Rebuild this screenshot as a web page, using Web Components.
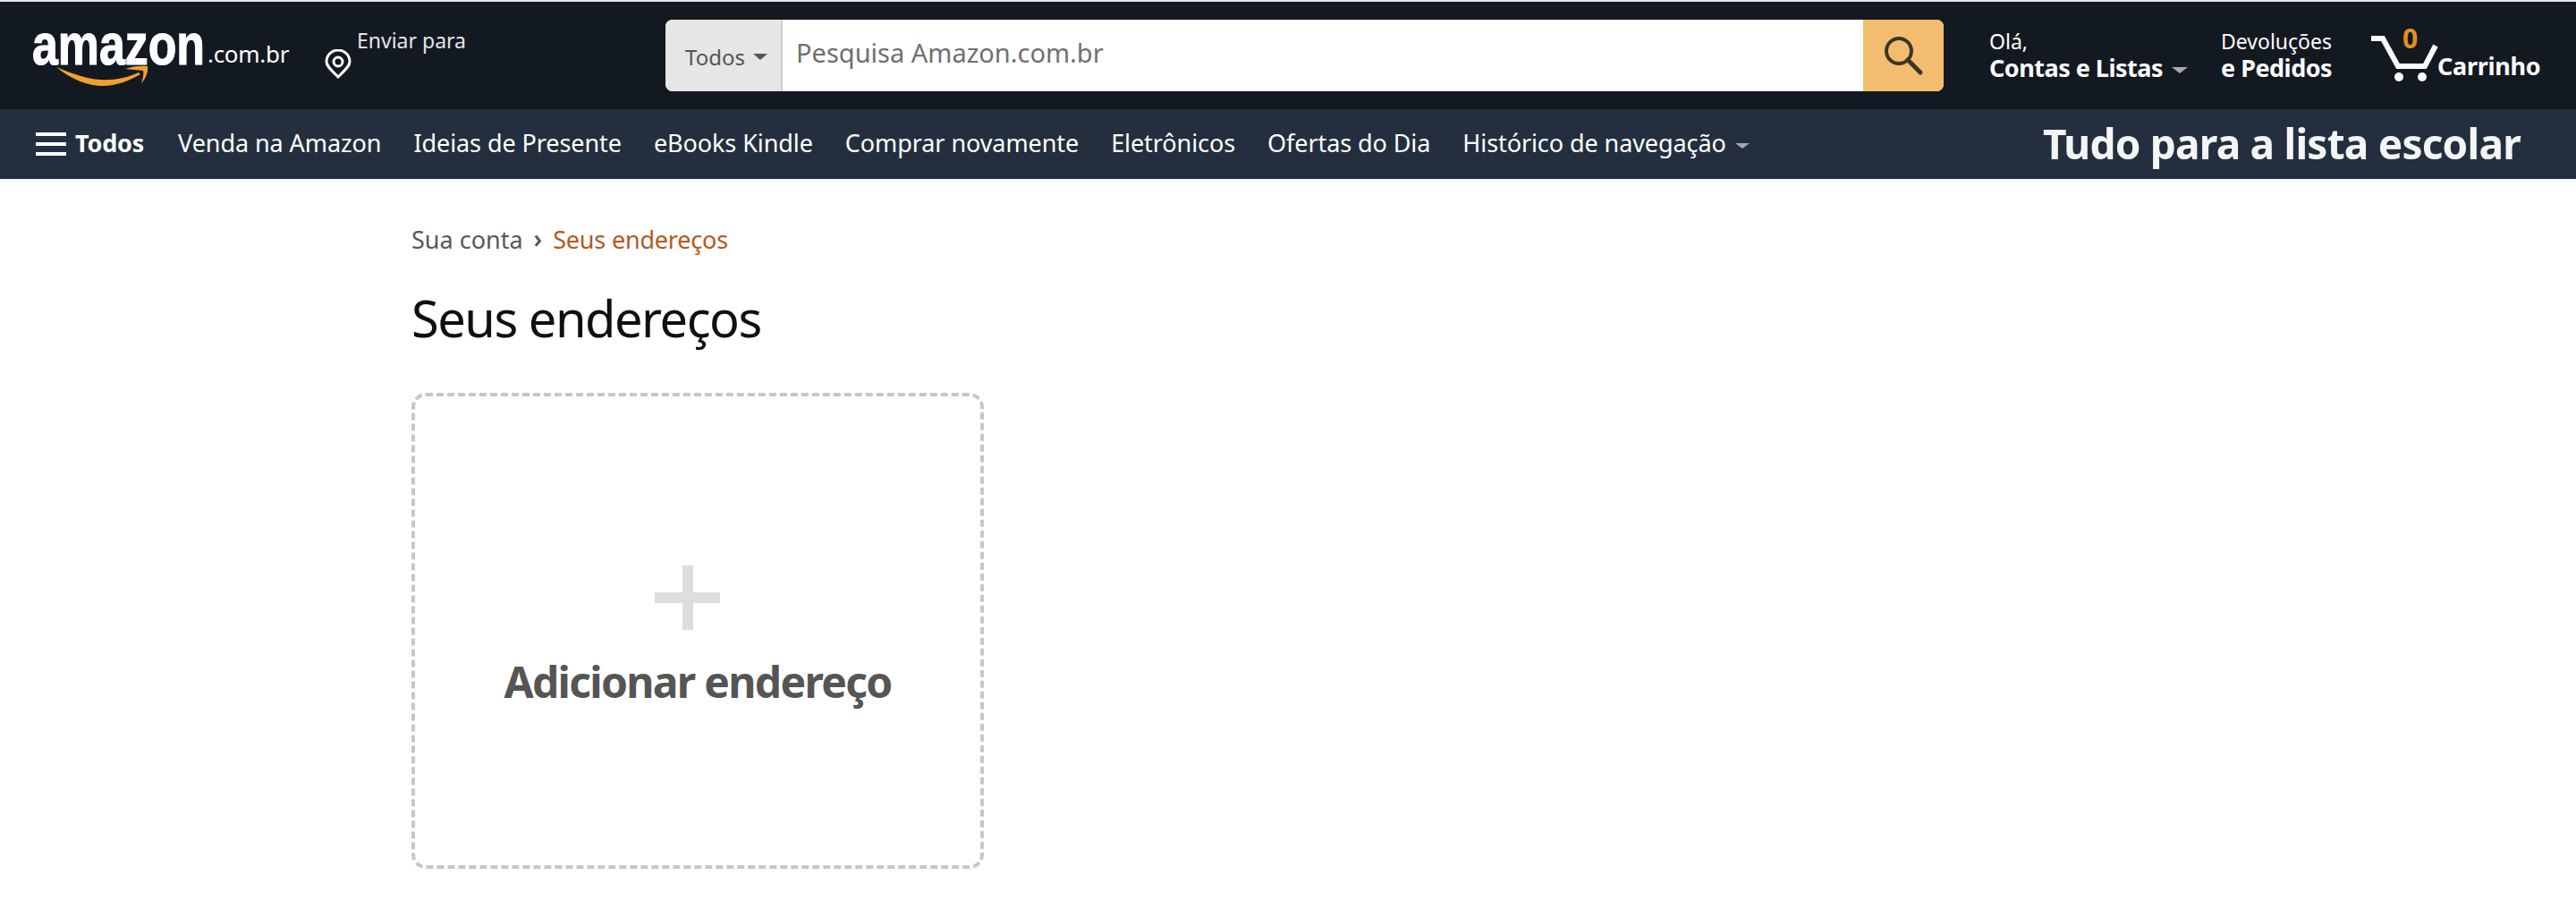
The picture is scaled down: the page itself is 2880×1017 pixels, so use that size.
<!DOCTYPE html>
<html lang="pt-BR">
<head>
<meta charset="utf-8">
<title>Seus endereços</title>
<style>
  html, body { margin: 0; padding: 0; background: #fff; }
  body { font-family: "Noto Sans", "Open Sans", sans-serif; overflow: hidden; }
</style>
</head>
<body>
<amz-top-bar>
  <amz-logo slot="logo"></amz-logo>
  <amz-deliver slot="deliver">Enviar para</amz-deliver>
  <amz-search slot="search" placeholder="Pesquisa Amazon.com.br">Todos</amz-search>
  <amz-account slot="account" line="Olá," strong="Contas e Listas" caret style="--w:259px"></amz-account>
  <amz-account slot="account" line="Devoluções" strong="e Pedidos" style="--w:168px"></amz-account>
  <amz-cart slot="cart" count="0">Carrinho</amz-cart>
</amz-top-bar>
<amz-nav-bar promo="Tudo para a lista escolar">
  <amz-nav-link>Venda na Amazon</amz-nav-link>
  <amz-nav-link>Ideias de Presente</amz-nav-link>
  <amz-nav-link>eBooks Kindle</amz-nav-link>
  <amz-nav-link>Comprar novamente</amz-nav-link>
  <amz-nav-link>Eletrônicos</amz-nav-link>
  <amz-nav-link>Ofertas do Dia</amz-nav-link>
  <amz-nav-link caret>Histórico de navegação</amz-nav-link>
</amz-nav-bar>
<amz-page>
  <amz-crumbs slot="crumbs" parent="Sua conta">Seus endereços</amz-crumbs>
  <h1 slot="title">Seus endereços</h1>
  <amz-add-card slot="card">Adicionar endereço</amz-add-card>
</amz-page>

<script>
class TopBar extends HTMLElement {
  connectedCallback() {
    this.attachShadow({mode: 'open'}).innerHTML = `
<style>
  :host { display: block; border-top: 2px solid #e3e4e4; height: 120px; background: #131921; color: #fff; }
  .row { display: flex; align-items: flex-start; height: 100%; padding: 20px 0 0 36px; box-sizing: border-box; }
  .deliver { margin-left: 40px; }
  .search { flex: none; }
  .account { display: flex; margin-left: 51px; }
</style>
<div class="row">
  <slot name="logo"></slot>
  <div class="deliver"><slot name="deliver"></slot></div>
  <div class="search"><slot name="search"></slot></div>
  <div class="account"><slot name="account"></slot></div>
  <div class="cart"><slot name="cart"></slot></div>
</div>`;
  }
}
customElements.define('amz-top-bar', TopBar);

class Logo extends HTMLElement {
  connectedCallback() {
    this.attachShadow({mode: 'open'}).innerHTML = `
<style>
  :host { display: block; position: relative; width: 287px; height: 78px; white-space: nowrap; }
  .word { display: inline-block; width: 196px; font: bold 64px/56px "Liberation Sans", sans-serif; color: #fff;
          -webkit-text-stroke: 1.2px #fff; transform: scaleX(.81); transform-origin: 0 50%; }
  .tld { font: 26px/30px "Noto Sans", sans-serif; color: #fff; letter-spacing: -.3px; vertical-align: 2px; }
  svg { position: absolute; left: 24px; top: 48px; }
</style>
<span class="word">amazon</span><span class="tld">.com.br</span>
<svg width="110" height="30" viewBox="0 0 110 30" fill="#f0a030">
  <path d="M3 5C20 19 38 26 55 26C70 26 85 20 97 13L95 11C82 17 68 20 52 19C36 18 20 12 3 5Z"/>
  <path d="M80 7C88 4 98 3 105 4C106 10 103 18 98 23C100 17 101 12 100 9C94 8 87 8 80 7Z"/>
</svg>`;
  }
}
customElements.define('amz-logo', Logo);

class Deliver extends HTMLElement {
  connectedCallback() {
    this.attachShadow({mode: 'open'}).innerHTML = `
<style>
  :host { display: flex; align-items: flex-start; width: 381px; color: #e6e6e6; font-size: 23px; line-height: 32px; }
  svg { margin-top: 33px; margin-right: 6px; flex: none; }
  span { margin-top: 7px; white-space: nowrap; }
</style>
<svg width="30" height="33" viewBox="0 0 30 33" fill="none" stroke="#fff" stroke-width="3">
  <path d="M15 31C8 24 2 19 2 14a13 13 0 0 1 26 0C28 19 22 24 15 31Z"/>
  <circle cx="15" cy="14" r="5"/>
</svg>
<span><slot></slot></span>`;
  }
}
customElements.define('amz-deliver', Deliver);

class Search extends HTMLElement {
  connectedCallback() {
    let ph = this.getAttribute('placeholder');
    this.attachShadow({mode: 'open'}).innerHTML = `
<style>
  :host { display: flex; width: 1429px; height: 80px; border-radius: 8px; overflow: hidden; background: #fff; }
  .cat { width: 131px; box-sizing: border-box; display: flex; align-items: center; gap: 9px; padding: 2px 0 0 22px;
         background: #e6e6e6; border-right: 2px solid #cdcdcd; color: #555; font-size: 24px; }
  .cat i { width: 0; height: 0; border: 8px solid transparent; border-top: 7px solid #555; border-bottom: 0; }
  .input { flex: 1; padding-left: 15px; line-height: 74px; color: #6f6f6f; font-size: 29px; }
  .btn { width: 90px; display: flex; align-items: center; justify-content: center; background: #f3bd70; }
</style>
<div class="cat"><slot></slot><i></i></div>
<div class="input">${ph}</div>
<div class="btn">
  <svg width="46" height="46" viewBox="0 0 46 46" fill="none" stroke="#3b3623" stroke-width="4">
    <circle cx="18" cy="18" r="14"/>
    <path d="M28 28L42 42" stroke-width="5" stroke-linecap="round"/>
  </svg>
</div>`;
  }
}
customElements.define('amz-search', Search);

class Account extends HTMLElement {
  connectedCallback() {
    let caret = this.hasAttribute('caret') ? '<i></i>' : '';
    this.attachShadow({mode: 'open'}).innerHTML = `
<style>
  :host { display: block; width: var(--w); white-space: nowrap; padding-top: 9px; }
  .line { font-size: 23px; line-height: 30px; color: #fff; }
  .strong { font-size: 27px; line-height: 30px; font-weight: 700; color: #fff; letter-spacing: -.5px; }
  i { display: inline-block; width: 0; height: 0; margin-left: 10px; vertical-align: 4px;
      border: 9px solid transparent; border-top: 7px solid #a6a8aa; border-bottom: 0; }
</style>
<div class="line">${this.getAttribute('line')}</div>
<div class="strong">${this.getAttribute('strong')}${caret}</div>`;
  }
}
customElements.define('amz-account', Account);

class Cart extends HTMLElement {
  connectedCallback() {
    this.attachShadow({mode: 'open'}).innerHTML = `
<style>
  :host { display: flex; position: relative; align-items: flex-end; height: 70px; }
  svg { flex: none; margin: 14px -2px 0 0; }
  .count { position: absolute; left: 35px; top: 3px; color: #e58e26; font-size: 30px; line-height: 36px; font-weight: 700; }
  .label { font-size: 27px; line-height: 30px; font-weight: 700; margin: 0 0 3px 0; color: #fff; letter-spacing: -.3px; }
</style>
<svg width="76" height="52" viewBox="0 0 76 52" fill="none" stroke="#fff" stroke-width="6">
  <path d="M0 3H13L30 34H60L72 11"/>
  <circle cx="31" cy="46" r="5" fill="#fff" stroke="none"/>
  <circle cx="57" cy="46" r="5" fill="#fff" stroke="none"/>
</svg>
<span class="count">${this.getAttribute('count')}</span>
<span class="label"><slot></slot></span>`;
  }
}
customElements.define('amz-cart', Cart);

class NavBar extends HTMLElement {
  connectedCallback() {
    this.attachShadow({mode: 'open'}).innerHTML = `
<style>
  :host { display: flex; align-items: center; height: 78px; padding: 0 0 3px 40px; box-sizing: border-box; background: #232f3e; color: #fff; white-space: nowrap; font-size: 27px; }
  .burger { display: flex; flex-direction: column; gap: 7px; width: 34px; margin: 3px 10px 0 0; }
  .burger b { display: block; height: 4px; background: #fff; }
  .all { font-weight: 700; margin-right: 38px; letter-spacing: -.2px; }
  .links { display: flex; gap: 36px; letter-spacing: -.08px; }
  .promo { margin-left: auto; margin-right: 62px; font-size: 46px; font-weight: 700; letter-spacing: -.8px; color: #f4f5f5; filter: blur(.7px); }
</style>
<div class="burger"><b></b><b></b><b></b></div>
<span class="all">Todos</span>
<div class="links"><slot></slot></div>
<span class="promo">${this.getAttribute('promo')}</span>`;
  }
}
customElements.define('amz-nav-bar', NavBar);

class NavLink extends HTMLElement {
  connectedCallback() {
    let caret = this.hasAttribute('caret') ? '<i></i>' : '';
    this.attachShadow({mode: 'open'}).innerHTML = `
<style>
  :host { display: block; color: #fff; }
  i { display: inline-block; width: 0; height: 0; margin-left: 10px; vertical-align: 4px;
      border: 8px solid transparent; border-top: 6px solid #a6a8aa; border-bottom: 0; }
</style>
<slot></slot>${caret}`;
  }
}
customElements.define('amz-nav-link', NavLink);

class Page extends HTMLElement {
  connectedCallback() {
    this.attachShadow({mode: 'open'}).innerHTML = `
<style>
  :host { display: block; padding: 50px 0 0 460px; color: #0f1111; }
  .title { margin: 31px 0 46px; }
  ::slotted(h1) { margin: 0; font-size: 56px; line-height: 76px; font-weight: 400; letter-spacing: -1.5px; color: #0f1111; }
</style>
<slot name="crumbs"></slot>
<div class="title"><slot name="title"></slot></div>
<slot name="card"></slot>`;
  }
}
customElements.define('amz-page', Page);

class Crumbs extends HTMLElement {
  connectedCallback() {
    this.attachShadow({mode: 'open'}).innerHTML = `
<style>
  :host { display: flex; font-size: 27px; line-height: 36px; color: #565959; white-space: nowrap; }
  .sep { margin: 0 12px; font-size: 28px; font-weight: 600; line-height: 32px; }
  .cur { color: #b25a20; letter-spacing: -.2px; }
</style>
<span>${this.getAttribute('parent')}</span><span class="sep">›</span><span class="cur"><slot></slot></span>`;
  }
}
customElements.define('amz-crumbs', Crumbs);

class AddCard extends HTMLElement {
  connectedCallback() {
    this.attachShadow({mode: 'open'}).innerHTML = `
<style>
  :host { display: flex; flex-direction: column; align-items: center; box-sizing: border-box; width: 640px; height: 532px;
          border: 4px dashed #c7c7c7; border-radius: 16px; padding-top: 189px; background: #fff; }
  svg { display: block; margin-left: -24px; }
  .label { font-size: 48px; line-height: 66px; font-weight: 700; letter-spacing: -1.7px; color: #555; margin-top: 25px; white-space: nowrap; }
</style>
<svg width="73" height="72" viewBox="0 0 73 72" fill="#ddd">
  <rect x="31" width="12" height="72"/>
  <rect y="30" width="73" height="12"/>
</svg>
<div class="label"><slot></slot></div>`;
  }
}
customElements.define('amz-add-card', AddCard);
</script>
</body>
</html>
